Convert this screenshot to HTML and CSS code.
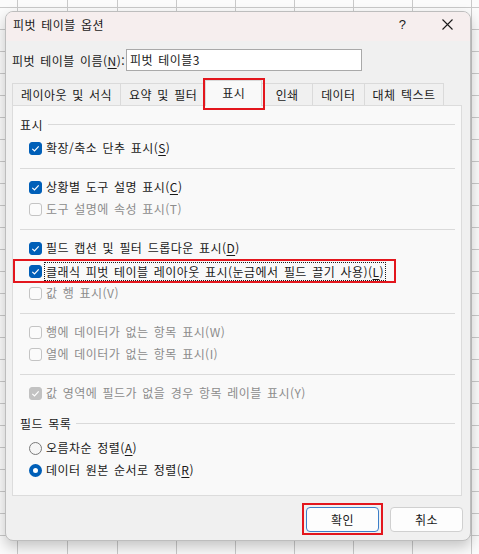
FILE: index.html
```html
<!DOCTYPE html>
<html lang="ko">
<head>
<meta charset="utf-8">
<title>피벗 테이블 옵션</title>
<link rel="stylesheet" href="styles.css">
</head>
<body>
<div class="dialog">
  <div class="titlebar">
    <span class="title">피벗 테이블 옵션</span>
    <span class="tb-btn tb-help">?</span>
    <span class="tb-btn tb-close">
      <svg width="11" height="11" viewBox="0 0 11 11"><path d="M0.5 0.5 L10.5 10.5 M10.5 0.5 L0.5 10.5" stroke="#1a1a1a" stroke-width="1.1" fill="none"/></svg>
    </span>
  </div>
  <div class="content">
    <div class="name-row">
      <span class="name-label">피벗 테이블 이름(<u>N</u>):</span>
      <div class="name-input">피벗 테이블3</div>
    </div>
    <div class="tabs">
      <span class="tab">레이아웃 및 서식</span>
      <span class="tab">요약 및 필터</span>
      <span class="tab tab-active">표시<i class="mark mark-tab"></i></span>
      <span class="tab">인쇄</span>
      <span class="tab">데이터</span>
      <span class="tab">대체 텍스트</span>
    </div>
    <div class="panel">
      <div class="group"><span>표시</span><i class="rule"></i></div>
      <div class="item item-first"><span class="cb cb-on"><svg viewBox="0 0 13 13"><path d="M3.3 6.9 L5.5 9 L9.7 4.3"/></svg></span><span class="lbl">확장/축소 단추 표시(<u>S</u>)</span></div>
      <div class="sep"></div>
      <div class="item"><span class="cb cb-on"><svg viewBox="0 0 13 13"><path d="M3.3 6.9 L5.5 9 L9.7 4.3"/></svg></span><span class="lbl">상황별 도구 설명 표시(<u>C</u>)</span></div>
      <div class="item off"><span class="cb"></span><span class="lbl">도구 설명에 속성 표시(<u>T</u>)</span></div>
      <div class="sep"></div>
      <div class="item"><span class="cb cb-on"><svg viewBox="0 0 13 13"><path d="M3.3 6.9 L5.5 9 L9.7 4.3"/></svg></span><span class="lbl">필드 캡션 및 필터 드롭다운 표시(<u>D</u>)</span></div>
      <div class="item item-focus"><span class="cb cb-on"><svg viewBox="0 0 13 13"><path d="M3.3 6.9 L5.5 9 L9.7 4.3"/></svg></span><span class="lbl focus">클래식 피벗 테이블 레이아웃 표시(눈금에서 필드 끌기 사용)(<u>L</u>)</span><i class="mark mark-row"></i></div>
      <div class="item off"><span class="cb"></span><span class="lbl">값 행 표시(<u>V</u>)</span></div>
      <div class="sep"></div>
      <div class="item off"><span class="cb"></span><span class="lbl">행에 데이터가 없는 항목 표시(<u>W</u>)</span></div>
      <div class="item off"><span class="cb"></span><span class="lbl">열에 데이터가 없는 항목 표시(<u>I</u>)</span></div>
      <div class="sep"></div>
      <div class="item off"><span class="cb cb-dis"><svg viewBox="0 0 13 13"><path d="M3.3 6.9 L5.5 9 L9.7 4.3"/></svg></span><span class="lbl">값 영역에 필드가 없을 경우 항목 레이블 표시(<u>Y</u>)</span></div>
      <div class="group group-2"><span>필드 목록</span><i class="rule"></i></div>
      <div class="item item-radio1"><span class="rb"></span><span class="lbl">오름차순 정렬(<u>A</u>)</span></div>
      <div class="item"><span class="rb rb-on"></span><span class="lbl">데이터 원본 순서로 정렬(<u>R</u>)</span></div>
    </div>
    <div class="buttons">
      <span class="btn btn-default">확인<i class="mark mark-btn"></i></span>
      <span class="btn">취소</span>
    </div>
  </div>
</div>
</body>
</html>
```

FILE: styles.css
```css
* { box-sizing: border-box; }

html, body { margin: 0; height: 100%; }

body {
  font-family: "Noto Sans CJK KR", "Noto Sans", sans-serif;
  font-size: 12px;
  letter-spacing: 0.45px;
  color: #1a1a1a;
  padding: 11px 0 0 5px;
  overflow: hidden;
  background-color: #fbfbfb;
  background-image:
    linear-gradient(#c9c9c9, #c9c9c9),
    linear-gradient(#c9c9c9, #c9c9c9),
    repeating-linear-gradient(to right, #c9c9c9 0 1px, transparent 1px 59px),
    repeating-linear-gradient(to bottom, transparent 0 7px, #c9c9c9 7px 8px, transparent 8px 22px);
  background-size: 1px 100%, 1px 100%, 100% 100%, 100% 100%;
  background-position: 17px 0, 67px 0, 117px 0, 0 0;
  background-repeat: no-repeat, no-repeat, no-repeat, repeat;
}

u { text-decoration: underline; text-underline-offset: 2px; }

.dialog {
  width: 466px;
  height: 530px;
  background: #f0f0f0;
  border: 1px solid #bdbdbd;
  border-radius: 8px;
  box-shadow: 0 6px 14px rgba(0, 0, 0, 0.22);
  overflow: hidden;
  display: flex;
  flex-direction: column;
}

.titlebar {
  height: 29px;
  background: #f6eeee;
  display: flex;
  align-items: flex-start;
  line-height: 25px;
  flex: none;
}
.title {
  flex: 1;
  padding-left: 7px;
  word-spacing: 1.5px;
}
.tb-btn {
  width: 45px;
  height: 25px;
  display: flex;
  align-items: center;
  justify-content: center;
}
.tb-help { font-family: "Liberation Sans", sans-serif; font-size: 13px; }
.tb-close svg { display: block; }

.content {
  padding: 8px 0 0 6px;
  flex: 1;
  display: flex;
  flex-direction: column;
}

.name-row {
  display: flex;
  align-items: center;
  height: 22px;
}
.name-label { width: 114px; word-spacing: 1.5px; white-space: nowrap; }
.name-input {
  width: 236px;
  height: 22px;
  background: #fff;
  border: 1px solid #a9a9a9;
  padding-left: 3px;
  line-height: 20px;
  word-spacing: 1.5px;
}

.tabs {
  margin-top: 9px;
  height: 26px;
  display: flex;
  align-items: flex-end;
  position: relative;
  z-index: 1;
}
.tab {
  height: 22px;
  line-height: 21px;
  padding: 0 8px;
  min-width: 52px;
  text-align: center;
  border: 1px solid #dadada;
  border-bottom: none;
  margin-right: -1px;
  background: #f0f0f0;
  word-spacing: 1.5px;
  margin-bottom: 1px;
}
.tab-active {
  height: 26px;
  margin-bottom: 0;
  line-height: 23px;
  background: #f9f9f9;
  padding: 0 16px;
  position: relative;
  z-index: 2;
}

.mark {
  position: absolute;
  border: 2px solid #e3161d;
  pointer-events: none;
}
.mark-tab { left: -3px; right: -4px; top: -3px; bottom: -4px; }
.mark-row { left: -7px; right: -10px; top: -1px; bottom: -1px; }
.mark-btn { left: -5px; right: -5px; top: -5px; bottom: -4px; }

.panel {
  width: 450px;
  height: 391px;
  margin-top: -1px;
  background: #f9f9f9;
  border: 1px solid #dcdcdc;
  padding: 7px 6px 0 7px;
  display: flex;
  flex-direction: column;
}

.group {
  height: 22px;
  display: flex;
  align-items: center;
  word-spacing: 1.5px;
  flex: none;
}
.group .rule {
  flex: 1;
  height: 1px;
  background: #dadada;
  margin-left: 5px;
}
.group-2 { margin-top: 8px; }

.sep {
  height: 1px;
  background: #dadada;
  margin: 9px 0 7px;
  flex: none;
}

.item {
  height: 22px;
  display: flex;
  align-items: center;
  padding-left: 9px;
  word-spacing: 1.5px;
  flex: none;
}
.item-first { margin-top: 2px; }
.item-radio1 { margin-top: 3px; }
.item-focus {
  align-self: flex-start;
  position: relative;
  margin-top: 1px;
}
.item.off { color: #8c8c8c; }
.item.off u { text-decoration: none; }

.cb {
  width: 13px;
  height: 13px;
  border: 1px solid #c4c4c4;
  border-radius: 3px;
  background: #fbfbfb;
  margin-right: 4px;
  flex: none;
}
.cb svg { display: block; width: 13px; height: 13px; margin: -1px; }
.cb svg path { fill: none; stroke: #fff; stroke-width: 1.2; }
.cb-on { background: #005fb8; border-color: #005fb8; }
.cb-dis { background: #c2c2c2; border-color: #c2c2c2; }

.lbl { line-height: 22px; white-space: nowrap; }
.focus {
  line-height: 17px;
  border: 1px dotted #1a1a1a;
  padding: 0 1px;
  margin-left: -2px;
}

.rb {
  width: 13px;
  height: 13px;
  border-radius: 50%;
  border: 1px solid #7a7a7a;
  background: #f6f6f6;
  margin-right: 4px;
  flex: none;
}
.rb-on {
  background: #fff;
  border: 4px solid #005fb8;
}

.buttons {
  display: flex;
  justify-content: flex-end;
  gap: 11px;
  padding-right: 7px;
  margin-top: 11px;
}
.btn {
  width: 73px;
  height: 25px;
  border: 1px solid #d0d0d0;
  border-radius: 4px;
  background: #fdfdfd;
  display: flex;
  align-items: center;
  justify-content: center;
  position: relative;
}
.btn-default { border-color: #3d7fc9; }
```
